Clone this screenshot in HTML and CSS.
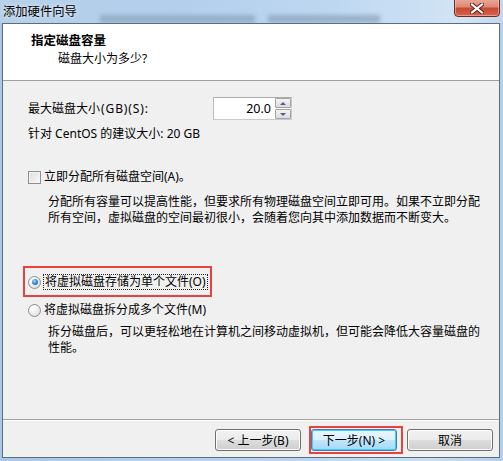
FILE: index.html
```html
<!DOCTYPE html>
<html lang="zh-CN">
<head>
    <meta charset="UTF-8">
    <title>添加硬件向导</title>
    <link rel="stylesheet" href="styles.css">
</head>
<body>
    <div class="window">
        <div class="titlebar">
            <span class="smudge smudge-a"></span>
            <span class="smudge smudge-b"></span>
            <span class="title">添加硬件向导</span>
            <div class="close">
                <svg width="14" height="11" viewBox="0 0 14 11">
                    <path d="M2 1.5 L12 9.5 M12 1.5 L2 9.5" stroke="#5a1a10" stroke-width="4" stroke-linecap="square"/>
                    <path d="M2 1.5 L12 9.5 M12 1.5 L2 9.5" stroke="#ffffff" stroke-width="2.2" stroke-linecap="square"/>
                </svg>
            </div>
        </div>

        <div class="client">
            <div class="header">
                <div class="header-title">指定磁盘容量</div>
                <div class="header-sub">磁盘大小为多少?</div>
            </div>

            <div class="content">
                <div class="size-row">
                    <span class="size-label">最大磁盘大小<span class="latin">(GB)(S):</span></span>
                    <div class="spin">
                        <div class="spin-value">20.0</div>
                        <div class="spin-btns">
                            <span class="spin-btn spin-up"></span>
                            <span class="spin-btn spin-down"></span>
                        </div>
                    </div>
                </div>

                <div class="hint">针对 CentOS 的建议大小: 20 GB</div>

                <div class="check-row">
                    <span class="checkbox"></span>
                    <span>立即分配所有磁盘空间(A)。</span>
                </div>
                <p class="desc">分配所有容量可以提高性能，但要求所有物理磁盘空间立即可用。如果不立即分配<br>所有空间，虚拟磁盘的空间最初很小，会随着您向其中添加数据而不断变大。</p>

                <div class="radio-row radio-first">
                    <span class="radio checked"></span>
                    <span class="focus">将虚拟磁盘存储为单个文件(O)</span>
                    <span class="mark mark-radio"></span>
                </div>
                <div class="radio-row radio-second">
                    <span class="radio"></span>
                    <span class="radio-text">将虚拟磁盘拆分成多个文件(M)</span>
                </div>
                <p class="desc desc-split">拆分磁盘后，可以更轻松地在计算机之间移动虚拟机，但可能会降低大容量磁盘的<br>性能。</p>
            </div>

            <div class="footer">
                <button class="btn">&lt; 上一步(B)</button>
                <span class="btn-wrap">
                    <button class="btn btn-default">下一步(N) &gt;</button>
                    <span class="mark mark-next"></span>
                </span>
                <button class="btn">取消</button>
            </div>
        </div>
    </div>
</body>
</html>
```

FILE: styles.css
```css
body {
    margin: 0;
    font-family: "Noto Sans", "Noto Sans CJK SC", sans-serif;
    font-size: 12px;
    color: #000;
}

.window {
    width: 503px;
    height: 461px;
    background: linear-gradient(90deg, #a9c7e6 0%, #b8d3ee 50%, #c9def3 85%, #b4cfea 100%);
    display: flex;
    flex-direction: column;
    overflow: hidden;
}

/* title bar */
.titlebar {
    height: 23px;
    position: relative;
    overflow: hidden;
    background: linear-gradient(90deg, #b7d0ea 0%, #b3cfec 35%, #bdd7f1 65%, #d3e4f5 92%, #c2d8ee 100%);
}

.smudge {
    position: absolute;
    top: 15px;
    height: 8px;
    background: #8ca3bb;
    filter: blur(2px);
    opacity: 0.75;
}

.smudge-a {
    left: 100px;
    width: 155px;
}

.smudge-b {
    left: 268px;
    width: 112px;
}

.title {
    position: absolute;
    left: 3px;
    top: 3px;
    line-height: 16px;
    font-size: 12.3px;
    font-family: "Noto Sans CJK SC", sans-serif;
    text-shadow: 0 0 4px rgba(255,255,255,0.9);
}

.close {
    position: absolute;
    left: 454px;
    top: -2px;
    width: 44px;
    height: 15px;
    border: 1px solid #6f2a1f;
    border-radius: 0 0 4px 4px;
    background: linear-gradient(180deg, #e9aa99 0%, #dc8a76 45%, #c84a33 55%, #d4664b 100%);
    box-shadow: inset 0 0 0 1px rgba(255,210,200,0.5);
    display: flex;
    align-items: center;
    justify-content: center;
    padding-top: 2px;
    box-sizing: content-box;
}

/* client area */
.client {
    margin: 0 3px 3px 2px;
    height: 435px;
    box-sizing: border-box;
    border: 1px solid #5f6c79;
    background: #f0f0f0;
    display: flex;
    flex-direction: column;
}

.header {
    height: 48px;
    flex-shrink: 0;
    background: #fff;
    border-bottom: 1px solid #a0a0a0;
    padding: 8px 0 0 28px;
}

.header-title {
    font-family: "Noto Sans CJK SC", sans-serif;
    font-weight: bold;
    font-size: 12.5px;
    line-height: 16px;
}

.header-sub {
    margin-top: 3px;
    padding-left: 27px;
    line-height: 16px;
}

.content {
    flex: 1;
    padding: 16px 0 0 25px;
}

.size-row {
    display: flex;
    align-items: center;
    height: 23px;
}

.size-label {
    width: 185px;
    line-height: 16px;
}

.latin {
    letter-spacing: 0.9px;
    margin-left: 1px;
}

.spin {
    display: flex;
    width: 79px;
    height: 23px;
    box-sizing: border-box;
    border: 1px solid #c6cad1;
    border-top-color: #abadb3;
    border-left-color: #b9bcc2;
    background: #fff;
}

.spin-value {
    flex: 1;
    text-align: right;
    padding-right: 4px;
    font-size: 12.5px;
    line-height: 21px;
}

.spin-btns {
    width: 16px;
    display: flex;
    flex-direction: column;
    gap: 1px;
    background: #fff;
}

.spin-btn {
    flex: 1;
    border: 1px solid #a3a3a3;
    border-radius: 1px;
    background: linear-gradient(180deg, #f4f4f4 0%, #e8e8e8 50%, #dcdcdc 100%);
    position: relative;
}

.spin-btn::after {
    content: "";
    position: absolute;
    left: 4px;
    top: 3px;
    border-left: 3px solid transparent;
    border-right: 3px solid transparent;
}

.spin-up::after {
    border-bottom: 3px solid #4f5f88;
}

.spin-down::after {
    border-top: 3px solid #4f5f88;
}

.hint {
    margin-top: 6px;
    line-height: 16px;
}

.check-row {
    margin-top: 27px;
    display: flex;
    align-items: center;
    gap: 3px;
    line-height: 16px;
}

.checkbox {
    width: 13px;
    height: 13px;
    box-sizing: border-box;
    border: 1px solid #8e8f8f;
    background: linear-gradient(135deg, #dcdcdc 0%, #eeeeee 60%, #fbfbfb 100%);
    box-shadow: inset 0 0 0 1px #f4f4f4;
}

.desc {
    margin: 9px 0 0 20px;
    white-space: nowrap;
    line-height: 16px;
}

.radio-row {
    position: relative;
    display: flex;
    align-items: center;
    height: 16px;
    line-height: 16px;
}

.radio-first {
    margin-top: 48px;
}

.radio-second {
    margin-top: 12px;
}

.radio {
    width: 13px;
    height: 13px;
    box-sizing: border-box;
    border-radius: 50%;
    border: 1px solid #8e8f8f;
    background: radial-gradient(circle at 35% 30%, #ffffff 0%, #ececec 55%, #d3d3d3 100%);
    position: relative;
    flex-shrink: 0;
}

.radio.checked::after {
    content: "";
    position: absolute;
    left: 2.5px;
    top: 2.5px;
    width: 6px;
    height: 6px;
    border-radius: 50%;
    background: radial-gradient(circle at 40% 35%, #9fd8ff 0%, #2f82d4 55%, #124f95 100%);
}

.focus {
    margin-left: 2px;
    padding: 0 1px;
    border: 1px dotted #222;
    line-height: 14px;
}

.radio-text {
    margin-left: 3px;
}

.desc-split {
    margin-top: 6px;
}

/* red annotation boxes */
.mark {
    position: absolute;
    border: 2px solid #e8413f;
    box-sizing: border-box;
    pointer-events: none;
}

.mark-radio {
    left: -5px;
    top: -8px;
    width: 189px;
    height: 31px;
}

.mark-next {
    left: -2px;
    top: -3px;
    right: -6px;
    bottom: -3px;
}

/* footer */
.footer {
    flex-shrink: 0;
    height: 38px;
    border-top: 1px solid #a0a0a0;
    box-shadow: inset 0 1px 0 #fff;
    display: flex;
    justify-content: flex-end;
    align-items: flex-start;
    gap: 10px;
    padding: 9px 6px 0 0;
    box-sizing: border-box;
}

.btn-wrap {
    position: relative;
    display: flex;
}

.btn {
    width: 86px;
    height: 22px;
    padding: 0;
    font-family: "Noto Sans", "Noto Sans CJK SC", sans-serif;
    font-size: 12px;
    color: #000;
    border: 1px solid #707070;
    border-radius: 3px;
    background: linear-gradient(180deg, #f2f2f2 0%, #ebebeb 50%, #dddddd 51%, #cfcfcf 100%);
    box-shadow: inset 0 0 0 1px #fcfcfc;
}

.btn-default {
    border-color: #3c7fb1;
    background: linear-gradient(180deg, #eaf6fd 0%, #d9f0fc 50%, #bee6fd 51%, #a7d9f5 100%);
    box-shadow: inset 0 0 0 1px #48c8f5;
}
```
